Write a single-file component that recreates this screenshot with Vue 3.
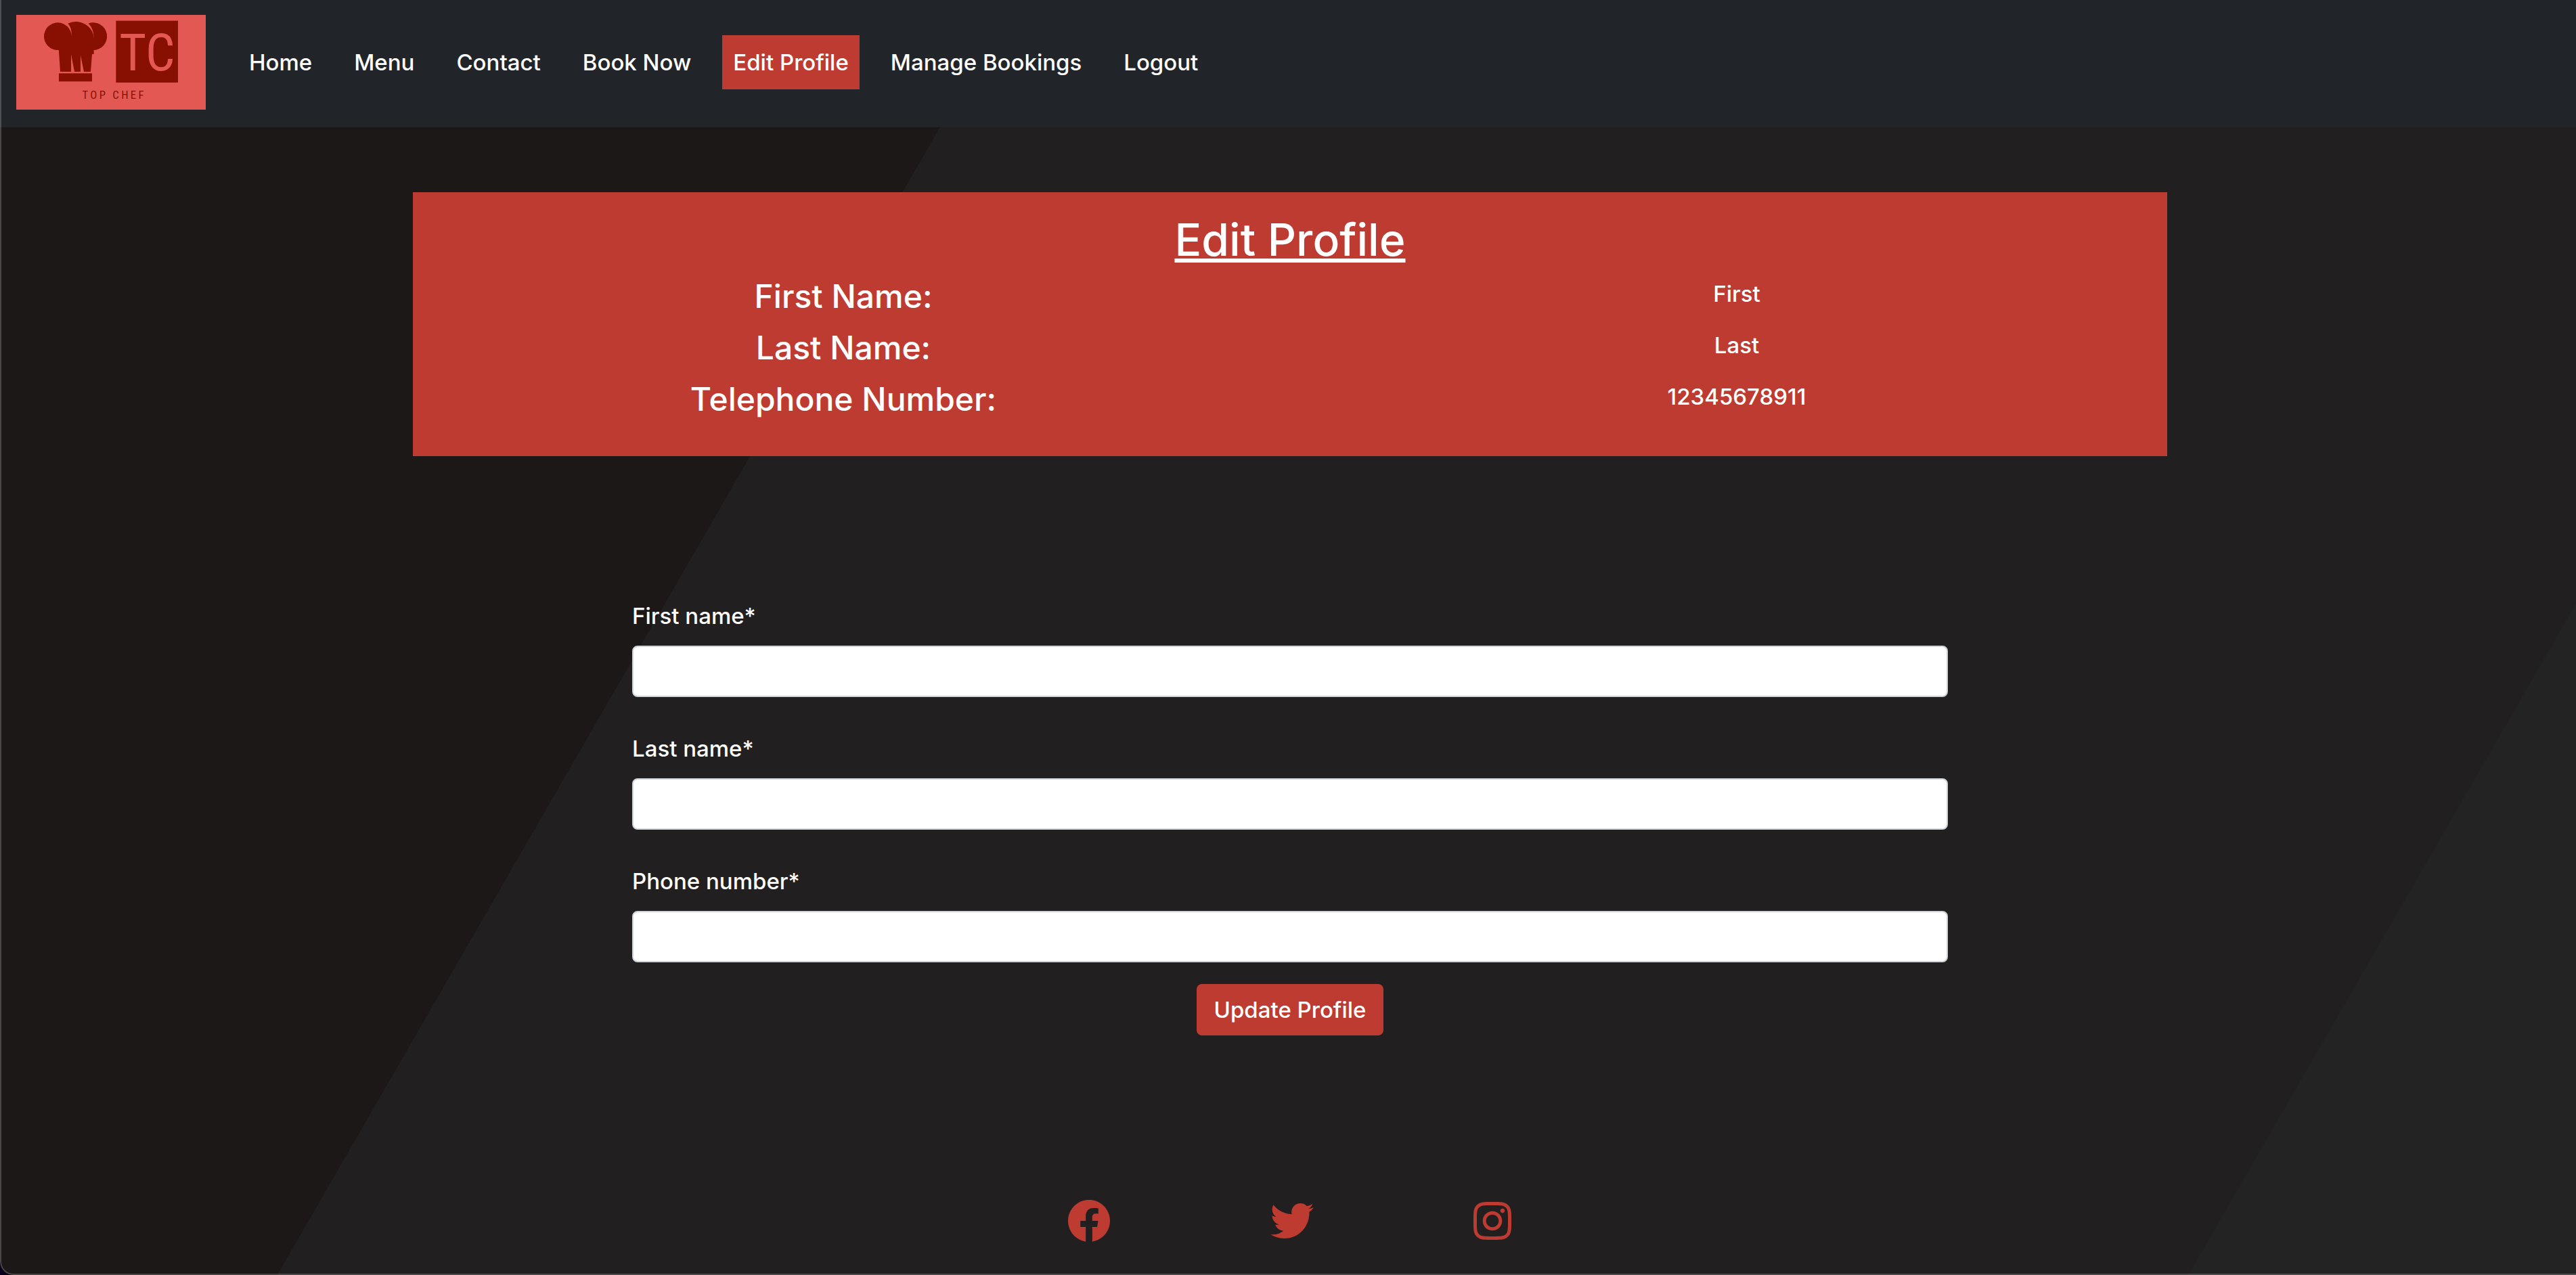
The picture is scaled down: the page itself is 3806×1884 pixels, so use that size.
<script setup>
import { ref } from 'vue'

const links = ['Home', 'Menu', 'Contact', 'Book Now', 'Edit Profile', 'Manage Bookings', 'Logout']
const active = 'Edit Profile'

const details = [
  { label: 'First Name:', value: 'First' },
  { label: 'Last Name:', value: 'Last' },
  { label: 'Telephone Number:', value: '12345678911' }
]

const fields = ref([
  { id: 'first_name', label: 'First name*', type: 'text', value: '' },
  { id: 'last_name', label: 'Last name*', type: 'text', value: '' },
  { id: 'phone_number', label: 'Phone number*', type: 'tel', value: '' }
])
</script>

<template>
  <div class="shell">
    <header class="navbar">
      <a href="#" class="brand" aria-label="Top Chef">
        <svg class="logo" viewBox="72 66 840 420">
          <rect class="salmon" x="72" y="66" width="840" height="420" />
          <g class="maroon">
            <circle cx="256" cy="161" r="61" />
            <path d="M301 104Q318 96 335 96C375 96 412 125 416 165L416 240L270 240L317 155Q318 122 301 104Z" />
            <path d="M392 104A61 61 0 1 1 410 222L400 222L416 165Q414 125 392 104Z" />
            <path d="M260 215H410L402 318H372L357 245V318H330L315 240V318H267Z" />
            <rect x="261" y="325" width="147" height="36" />
            <rect x="514" y="92" width="275" height="274" />
          </g>
          <text class="salmon mono" x="652" y="312" text-anchor="middle">TC</text>
          <text class="maroon name" x="506" y="439" text-anchor="middle">TOP CHEF</text>
        </svg>
      </a>
      <nav class="links">
        <a v-for="l in links" :key="l" href="#" class="link" :class="{ active: l === active }">{{ l }}</a>
      </nav>
    </header>

    <main class="content">
      <section class="card">
        <h1 class="title">Edit Profile</h1>
        <dl class="details">
          <div v-for="d in details" :key="d.label" class="detail">
            <dt>{{ d.label }}</dt>
            <dd>{{ d.value }}</dd>
          </div>
        </dl>
      </section>

      <form class="form" @submit.prevent>
        <div class="fields">
          <div v-for="f in fields" :key="f.id" class="field">
            <label :for="f.id">{{ f.label }}</label>
            <input :id="f.id" v-model="f.value" :type="f.type" />
          </div>
        </div>
        <button type="submit" class="submit">Update Profile</button>
      </form>
    </main>

    <footer class="footer">
      <a href="#" aria-label="Facebook">
        <svg class="icon" viewBox="0 0 512 512"><path d="M504 256C504 119 393 8 256 8S8 119 8 256c0 123.780 90.690 226.380 209.250 245V327.690h-63V256h63v-54.640c0-62.150 37-96.480 93.670-96.480 27.140 0 55.520 4.840 55.520 4.840v61h-31.280c-30.800 0-40.410 19.120-40.410 38.730V256h68.780l-11 71.690h-57.780V501C413.310 482.380 504 379.780 504 256z" /></svg>
      </a>
      <a href="#" aria-label="Twitter">
        <svg class="icon" viewBox="0 0 512 512"><path d="M459.370 151.716c.325 4.548.325 9.097.325 13.645 0 138.720-105.583 298.558-298.558 298.558-59.452 0-114.680-17.219-161.137-47.106 8.447.974 16.568 1.299 25.340 1.299 49.055 0 94.213-16.568 130.274-44.832-46.132-.975-84.792-31.188-98.112-72.772 6.498.974 12.995 1.624 19.818 1.624 9.421 0 18.843-1.300 27.614-3.573-48.081-9.747-84.143-51.980-84.143-102.985v-1.299c13.969 7.797 30.214 12.670 47.431 13.319-28.264-18.843-46.781-51.005-46.781-87.391 0-19.492 5.197-37.360 14.294-52.954 51.655 63.675 129.300 105.258 216.365 109.807-1.624-7.797-2.599-15.918-2.599-24.040 0-57.828 46.782-104.934 104.934-104.934 30.213 0 57.502 12.670 76.670 33.137 23.715-4.548 46.456-13.320 66.599-25.340-7.798 24.366-24.366 44.833-46.132 57.827 21.117-2.273 41.584-8.122 60.426-16.243-14.292 20.791-32.161 39.308-52.628 54.253z" /></svg>
      </a>
      <a href="#" aria-label="Instagram">
        <svg class="icon narrow" viewBox="0 0 448 512"><path d="M224.100 141c-63.600 0-114.900 51.300-114.900 114.900s51.300 114.900 114.900 114.900S339 319.500 339 255.900 287.700 141 224.100 141zm0 189.600c-41.100 0-74.700-33.500-74.700-74.700s33.500-74.700 74.700-74.700 74.700 33.500 74.700 74.700-33.600 74.700-74.700 74.700zm146.400-194.300c0 14.900-12 26.800-26.800 26.800-14.900 0-26.800-12-26.800-26.800s12-26.800 26.800-26.800 26.800 12 26.800 26.800zm76.100 27.200c-1.700-35.900-9.900-67.700-36.200-93.900-26.200-26.200-58-34.400-93.900-36.200-37-2.100-147.900-2.100-184.900 0-35.800 1.700-67.600 9.900-93.900 36.100s-34.400 58-36.200 93.900c-2.100 37-2.100 147.900 0 184.900 1.700 35.900 9.900 67.700 36.200 93.900s58 34.400 93.900 36.200c37 2.100 147.900 2.100 184.900 0 35.900-1.700 67.700-9.900 93.900-36.200 26.200-26.200 34.400-58 36.200-93.900 2.100-37 2.100-147.800 0-184.800zM398.800 388c-7.800 19.600-22.900 34.700-42.600 42.600-29.500 11.700-99.500 9-132.100 9s-102.700 2.600-132.100-9c-19.600-7.800-34.700-22.900-42.600-42.600-11.700-29.500-9-99.500-9-132.100s-2.600-102.700 9-132.100c7.800-19.600 22.900-34.700 42.600-42.600 29.500-11.700 99.500-9 132.100-9s102.700-2.600 132.100 9c19.600 7.800 34.700 22.900 42.600 42.600 11.700 29.500 9 99.500 9 132.100s2.700 102.700-9 132.100z" /></svg>
      </a>
    </footer>
  </div>
</template>

<style>
body {
  margin: 0;
  background: #08001a;
}
</style>

<style scoped>
.shell {
  position: relative;
  display: flex;
  flex-direction: column;
  box-sizing: border-box;
  min-height: 100vh;
  overflow: hidden;
  border-radius: 0 0 0 20px;
  background: linear-gradient(120deg, #1c1817 0 30.6%, #221f20 30.6% 88.3%, #232323 88.3%);
  color: #fff;
  font-family: Inter, "Liberation Sans", sans-serif;
  font-size: 33px;
  font-weight: 500;
  line-height: 48px;
}

/* thin window edge over the left and bottom sides */
.shell::after {
  content: "";
  position: absolute;
  inset: 0;
  border: solid rgba(255, 255, 255, 0.2);
  border-width: 0 0 2px 2px;
  border-radius: 0 0 0 20px;
  pointer-events: none;
}

.navbar {
  display: flex;
  align-items: center;
  gap: 48px;
  padding: 22px 24px 26px;
  background: #212529;
}

.logo {
  display: block;
  width: 280px;
  height: 140px;
}

.salmon { fill: #e45853; }
.maroon { fill: #871003; }

.mono,
.name {
  font-family: "Liberation Sans Narrow", "Roboto Condensed", "DejaVu Sans Condensed", sans-serif;
  font-weight: 400;
}

.mono { font-size: 230px; }

.name {
  font-size: 50px;
  letter-spacing: 10px;
}

.links {
  display: flex;
  align-items: center;
  gap: 30px;
}

.link {
  padding: 16px;
  color: #fff;
  text-decoration: none;
  white-space: nowrap;
}

.active { background: #bd3b31; }

.content {
  display: flex;
  flex-direction: column;
  align-items: center;
  padding: 96px 24px 0 30px;
}

.card {
  box-sizing: border-box;
  width: 100%;
  max-width: 2592px;
  padding: 32px 0 54px;
  background: #bd3b31;
  text-align: center;
}

.title {
  margin: 0 0 16px;
  font-size: 66px;
  font-weight: 500;
  line-height: 76px;
  text-decoration: underline;
}

.details {
  display: grid;
  gap: 16px;
  margin: 0 -24px;
}

.detail {
  display: grid;
  grid-template-columns: 1fr 1fr;
}

dt {
  font-size: 48px;
  line-height: 60px;
}

dd {
  margin: 0;
  line-height: 52px;
}

.form {
  display: flex;
  flex-direction: column;
  align-items: center;
  gap: 32px;
  width: 75%;
  max-width: 1944px;
  padding-top: 212px;
}

.fields {
  display: flex;
  flex-direction: column;
  gap: 52px;
  width: 100%;
}

.field {
  display: flex;
  flex-direction: column;
  gap: 20px;
}

.field input {
  box-sizing: border-box;
  width: 100%;
  height: 76px;
  padding: 12px 24px;
  border: 2px solid #ced4da;
  border-radius: 8px;
  background: #fff;
  color: #212529;
  font: inherit;
}

.submit {
  height: 76px;
  padding: 0 26px;
  border: 0;
  border-radius: 8px;
  background: #bd3b31;
  color: #fff;
  font: inherit;
}

.footer {
  display: flex;
  justify-content: center;
  gap: 236px;
  margin-top: auto;
  padding: 48px 0 48px 4px;
}

.icon {
  display: block;
  width: 64px;
  height: 64px;
  fill: #bd3b31;
}

.narrow { width: 56px; }
</style>
